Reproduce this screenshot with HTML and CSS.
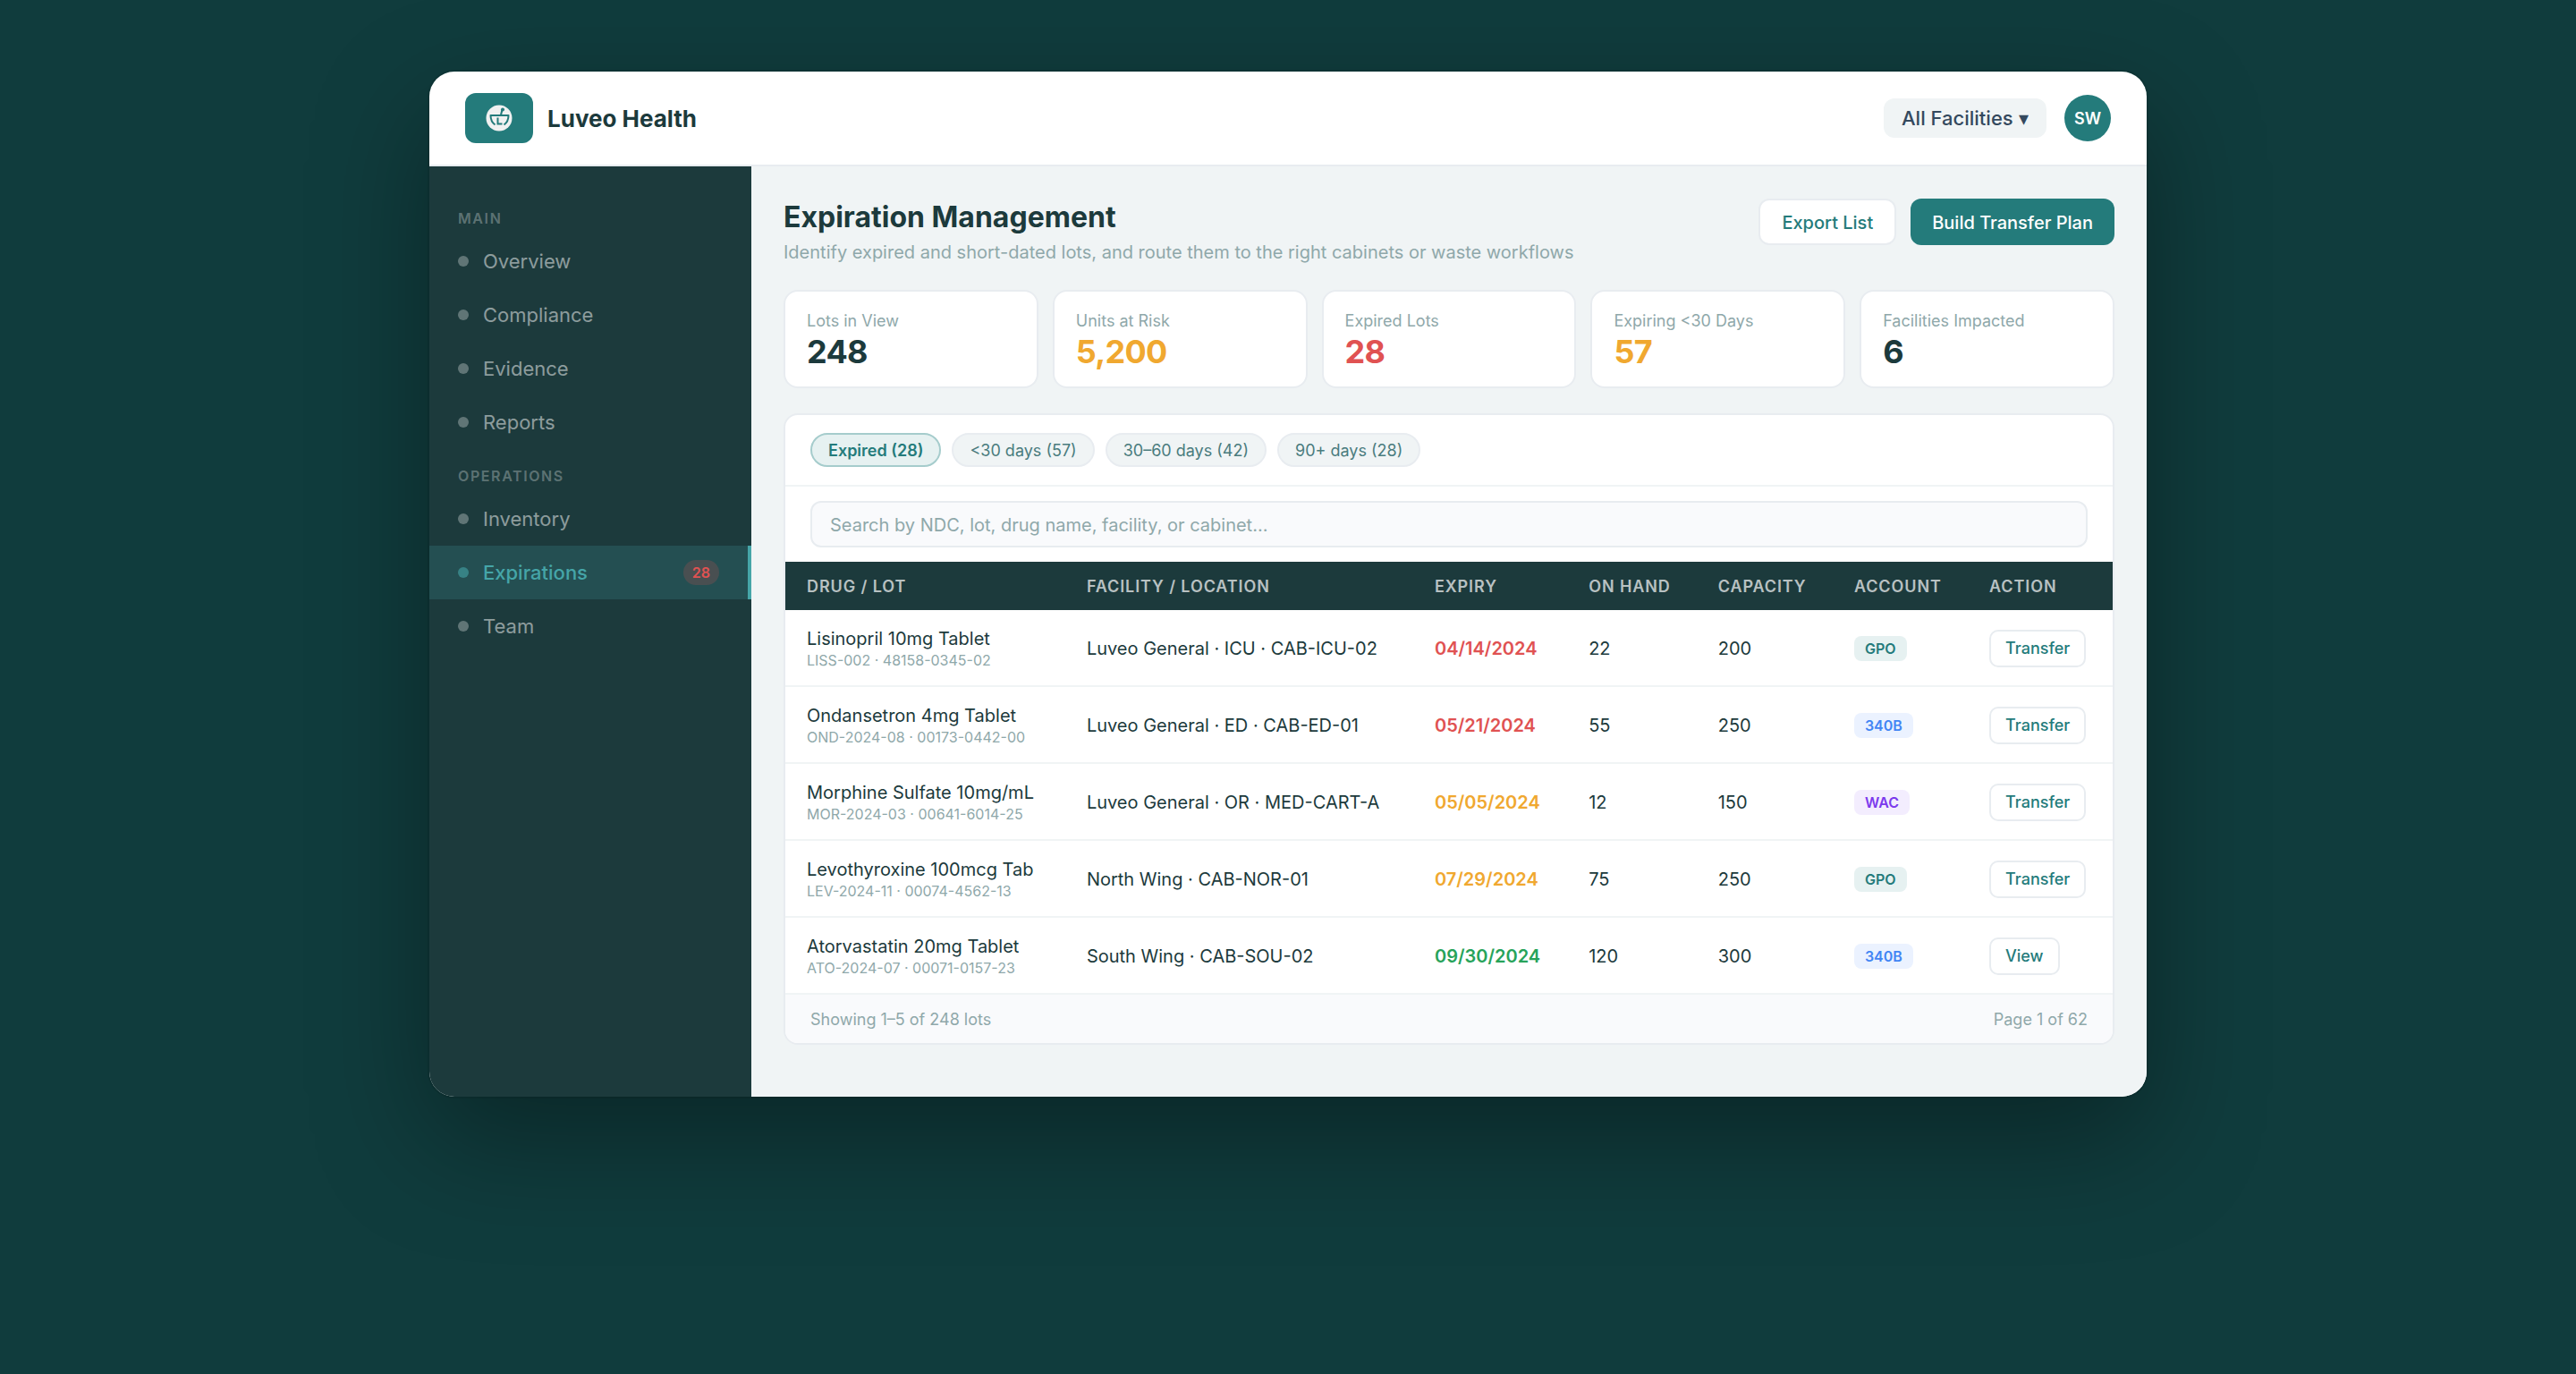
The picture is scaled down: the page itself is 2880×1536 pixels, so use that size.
FILE: index.html
```html
<!DOCTYPE html>
<html lang="en">

<head>
  <meta charset="utf-8">
  <title>Luveo Health - Expiration Management</title>
  <meta name="viewport" content="width=device-width, initial-scale=1">
  <link rel="stylesheet" href="styles.css">
</head>

<body>
  <div class="app">
    <header class="topbar">
      <div class="logo">
        <svg viewBox="0 0 60 60" width="30" height="30" aria-hidden="true">
          <circle cx="30" cy="30" r="29" fill="#f1f1f1" />
          <g fill="none" stroke="#247b7b" stroke-width="4">
            <path d="M21 45C14 40 11 33 11 24H51C51 33 48 40 41 45" stroke-linejoin="round" />
            <path d="M34 23L37 11" />
            <path d="M27 29V43H37" />
          </g>
          <circle cx="38" cy="11" r="4" fill="#247b7b" />
        </svg>
      </div>
      <div class="brand">Luveo Health</div>
      <select class="facility" aria-label="Facility">
        <option>All Facilities ▾</option>
      </select>
      <div class="avatar">SW</div>
    </header>

    <div class="body">
      <nav class="sidebar">
        <div class="nav-title">Main</div>
        <a class="nav-item" href="#overview">Overview</a>
        <a class="nav-item" href="#compliance">Compliance</a>
        <a class="nav-item" href="#evidence">Evidence</a>
        <a class="nav-item" href="#reports">Reports</a>
        <div class="nav-title">Operations</div>
        <a class="nav-item" href="#inventory">Inventory</a>
        <a class="nav-item active" href="#expirations">Expirations <span class="count">28</span></a>
        <a class="nav-item" href="#team">Team</a>
      </nav>

      <main class="main">
        <div class="page-head">
          <div>
            <h1>Expiration Management</h1>
            <p>Identify expired and short-dated lots, and route them to the right cabinets or waste workflows</p>
          </div>
          <div class="actions">
            <button class="btn">Export List</button>
            <button class="btn primary">Build Transfer Plan</button>
          </div>
        </div>

        <div class="stats">
          <div class="stat">
            <div class="stat-label">Lots in View</div>
            <div class="stat-value">248</div>
          </div>
          <div class="stat">
            <div class="stat-label">Units at Risk</div>
            <div class="stat-value warn">5,200</div>
          </div>
          <div class="stat">
            <div class="stat-label">Expired Lots</div>
            <div class="stat-value bad">28</div>
          </div>
          <div class="stat">
            <div class="stat-label">Expiring &lt;30 Days</div>
            <div class="stat-value warn">57</div>
          </div>
          <div class="stat">
            <div class="stat-label">Facilities Impacted</div>
            <div class="stat-value">6</div>
          </div>
        </div>

        <section class="panel">
          <div class="filters">
            <button class="chip active">Expired (28)</button>
            <button class="chip">&lt;30 days (57)</button>
            <button class="chip">30–60 days (42)</button>
            <button class="chip">90+ days (28)</button>
          </div>
          <div class="search">
            <input type="text" aria-label="Search lots" placeholder="Search by NDC, lot, drug name, facility, or cabinet...">
          </div>
          <table>
            <thead>
              <tr>
                <th>Drug / Lot</th>
                <th>Facility / Location</th>
                <th>Expiry</th>
                <th>On Hand</th>
                <th>Capacity</th>
                <th>Account</th>
                <th>Action</th>
              </tr>
            </thead>
            <tbody>
              <tr>
                <td>Lisinopril 10mg Tablet<div class="lot">LISS-002 · 48158-0345-02</div></td>
                <td>Luveo General · ICU · CAB-ICU-02</td>
                <td class="date bad">04/14/2024</td>
                <td>22</td>
                <td>200</td>
                <td><span class="tag gpo">GPO</span></td>
                <td><button class="row-btn">Transfer</button></td>
              </tr>
              <tr>
                <td>Ondansetron 4mg Tablet<div class="lot">OND-2024-08 · 00173-0442-00</div></td>
                <td>Luveo General · ED · CAB-ED-01</td>
                <td class="date bad">05/21/2024</td>
                <td>55</td>
                <td>250</td>
                <td><span class="tag b340">340B</span></td>
                <td><button class="row-btn">Transfer</button></td>
              </tr>
              <tr>
                <td>Morphine Sulfate 10mg/mL<div class="lot">MOR-2024-03 · 00641-6014-25</div></td>
                <td>Luveo General · OR · MED-CART-A</td>
                <td class="date warn">05/05/2024</td>
                <td>12</td>
                <td>150</td>
                <td><span class="tag wac">WAC</span></td>
                <td><button class="row-btn">Transfer</button></td>
              </tr>
              <tr>
                <td>Levothyroxine 100mcg Tab<div class="lot">LEV-2024-11 · 00074-4562-13</div></td>
                <td>North Wing · CAB-NOR-01</td>
                <td class="date warn">07/29/2024</td>
                <td>75</td>
                <td>250</td>
                <td><span class="tag gpo">GPO</span></td>
                <td><button class="row-btn">Transfer</button></td>
              </tr>
              <tr>
                <td>Atorvastatin 20mg Tablet<div class="lot">ATO-2024-07 · 00071-0157-23</div></td>
                <td>South Wing · CAB-SOU-02</td>
                <td class="date good">09/30/2024</td>
                <td>120</td>
                <td>300</td>
                <td><span class="tag b340">340B</span></td>
                <td><button class="row-btn">View</button></td>
              </tr>
            </tbody>
          </table>
          <div class="panel-foot">
            <span>Showing 1–5 of 248 lots</span>
            <span>Page 1 of 62</span>
          </div>
        </section>
      </main>
    </div>
  </div>
</body>

</html>
```

FILE: styles.css
```css
*,
*:before,
*:after {
  box-sizing: border-box
}

* {
  margin: 0;
  padding: 0
}

:root {
  --teal: #247b7b;
  --dark: #1c3a3c;
  --muted: #8fa8aa;
  --line: #e8ecf0;
  --bg: #f0f4f5
}

body {
  min-height: 100vh;
  padding: 80px;
  background: #103c3d;
  color: var(--dark);
  font-family: Inter, sans-serif;
  font-size: 20px;
  line-height: 24px
}

button,
input,
select {
  font: inherit
}

button,
select {
  cursor: pointer
}

.app {
  max-width: 1920px;
  margin: 0 auto;
  border-radius: 28px;
  overflow: hidden;
  background: #fff;
  box-shadow: 0 48px 128px rgba(0, 0, 0, 0.35), 0 0 0 2px rgba(0, 0, 0, 0.08)
}

.topbar {
  display: flex;
  align-items: center;
  padding: 24px 40px;
  border-bottom: 2px solid var(--line)
}

.logo {
  display: flex;
  align-items: center;
  justify-content: center;
  width: 76px;
  height: 56px;
  border-radius: 12px;
  background: var(--teal)
}

.brand {
  margin-left: 16px;
  margin-right: auto;
  padding-top: 2px;
  font-size: 26px;
  font-weight: 700
}

.facility {
  appearance: none;
  height: 44px;
  padding: 0 20px;
  border: none;
  border-radius: 12px;
  background: var(--bg);
  color: #34495e;
  font-size: 22px;
  font-weight: 500
}

.avatar {
  display: flex;
  align-items: center;
  justify-content: center;
  width: 52px;
  height: 52px;
  margin-left: 20px;
  padding-top: 2px;
  border-radius: 50%;
  background: var(--teal);
  color: #fff;
  font-size: 18px;
  font-weight: 600
}

.body {
  display: flex;
  min-height: 1040px
}

/* sidebar */

.sidebar {
  flex: 0 0 360px;
  padding: 28px 0;
  background: var(--dark)
}

.nav-title {
  padding: 20px 32px 8px;
  color: rgba(255, 255, 255, 0.3);
  font-size: 16px;
  font-weight: 600;
  line-height: 20px;
  letter-spacing: 0.1em;
  text-transform: uppercase
}

.nav-item {
  display: flex;
  align-items: center;
  gap: 16px;
  height: 60px;
  padding: 0 32px;
  color: rgba(255, 255, 255, 0.5);
  font-size: 22px;
  text-decoration: none
}

.nav-item:before {
  content: '';
  width: 12px;
  height: 12px;
  border-radius: 50%;
  background: currentColor;
  opacity: 0.6
}

.nav-item.active {
  border-right: 4px solid #45a5a8;
  background: rgba(69, 165, 168, 0.2);
  color: #45a5a8;
  font-weight: 500
}

.count {
  margin-left: auto;
  padding: 4px 10px;
  border-radius: 20px;
  background: rgba(224, 82, 82, 0.2);
  color: #e05252;
  font-size: 16px;
  font-weight: 600;
  line-height: 20px
}

/* content */

.main {
  flex: 1;
  min-width: 0;
  padding: 36px;
  background: var(--bg)
}

.page-head {
  display: flex;
  justify-content: space-between;
  align-items: flex-start;
  margin-bottom: 28px
}

h1 {
  font-size: 32px;
  font-weight: 700;
  line-height: 42px
}

.page-head p {
  margin-top: 6px;
  padding-bottom: 2px;
  color: var(--muted)
}

.actions {
  display: flex;
  gap: 16px
}

.btn {
  height: 52px;
  padding: 2px 24px 0;
  border: 2px solid var(--line);
  border-radius: 12px;
  background: #fff;
  color: var(--teal);
  font-weight: 500
}

.btn.primary {
  border: none;
  background: var(--teal);
  color: #fff
}

.stats {
  display: grid;
  grid-template-columns: repeat(5, 1fr);
  gap: 16px;
  margin-bottom: 28px
}

.stat {
  padding: 22px 24px 18px;
  border: 2px solid var(--line);
  border-radius: 16px;
  background: #fff
}

.stat-label {
  margin-bottom: 2px;
  color: var(--muted);
  font-size: 18px;
  line-height: 22px
}

.stat-value {
  font-size: 36px;
  font-weight: 700;
  line-height: 42px;
  letter-spacing: -0.02em
}

.warn {
  color: #f0a830
}

.bad {
  color: #e05252
}

.good {
  color: #27a35a
}

.panel {
  border: 2px solid var(--line);
  border-radius: 16px;
  overflow: hidden;
  background: #fff
}

.filters {
  display: flex;
  gap: 12px;
  padding: 20px 28px;
  border-bottom: 2px solid var(--bg)
}

.chip {
  height: 38px;
  padding: 2px 18px 0;
  border: 2px solid var(--line);
  border-radius: 20px;
  background: var(--bg);
  color: #4a7c7e;
  font-size: 18px
}

.chip.active {
  border-color: #a5cccc;
  background: #e6f1f1;
  color: var(--teal);
  font-weight: 600
}

.search {
  padding: 16px 28px
}

.search input {
  display: block;
  width: 100%;
  height: 52px;
  padding: 2px 20px 0;
  border: 2px solid var(--line);
  border-radius: 12px;
  background: #f9fafc;
  color: var(--dark)
}

.search input::placeholder {
  color: var(--muted)
}

table {
  width: 100%;
  border-spacing: 0
}

th {
  height: 54px;
  padding: 2px 24px 0;
  background: var(--dark);
  color: rgba(255, 255, 255, 0.7);
  font-size: 18px;
  font-weight: 600;
  letter-spacing: 0.05em;
  text-align: left;
  text-transform: uppercase;
  white-space: nowrap
}

td {
  height: 86px;
  padding: 2px 24px 0;
  border-bottom: 2px solid var(--bg);
  white-space: nowrap
}

.lot {
  margin-top: 2px;
  color: var(--muted);
  font-size: 16px;
  line-height: 20px
}

.date {
  font-weight: 600
}

.tag {
  display: inline-block;
  padding: 4px 12px;
  border-radius: 8px;
  font-size: 16px;
  font-weight: 600;
  line-height: 20px
}

.gpo {
  background: #e6f1f1;
  color: var(--teal)
}

.b340 {
  background: #ebf2ff;
  color: #4285f4
}

.wac {
  background: #f3edfe;
  color: #7c3aed
}

.row-btn {
  height: 42px;
  padding: 0 16px;
  border: 2px solid var(--line);
  border-radius: 10px;
  background: #fff;
  color: var(--teal);
  font-size: 18px;
  font-weight: 500
}

.panel-foot {
  display: flex;
  justify-content: space-between;
  padding: 16px 28px 14px;
  background: #f9fafc;
  color: var(--muted);
  font-size: 18px
}
```
